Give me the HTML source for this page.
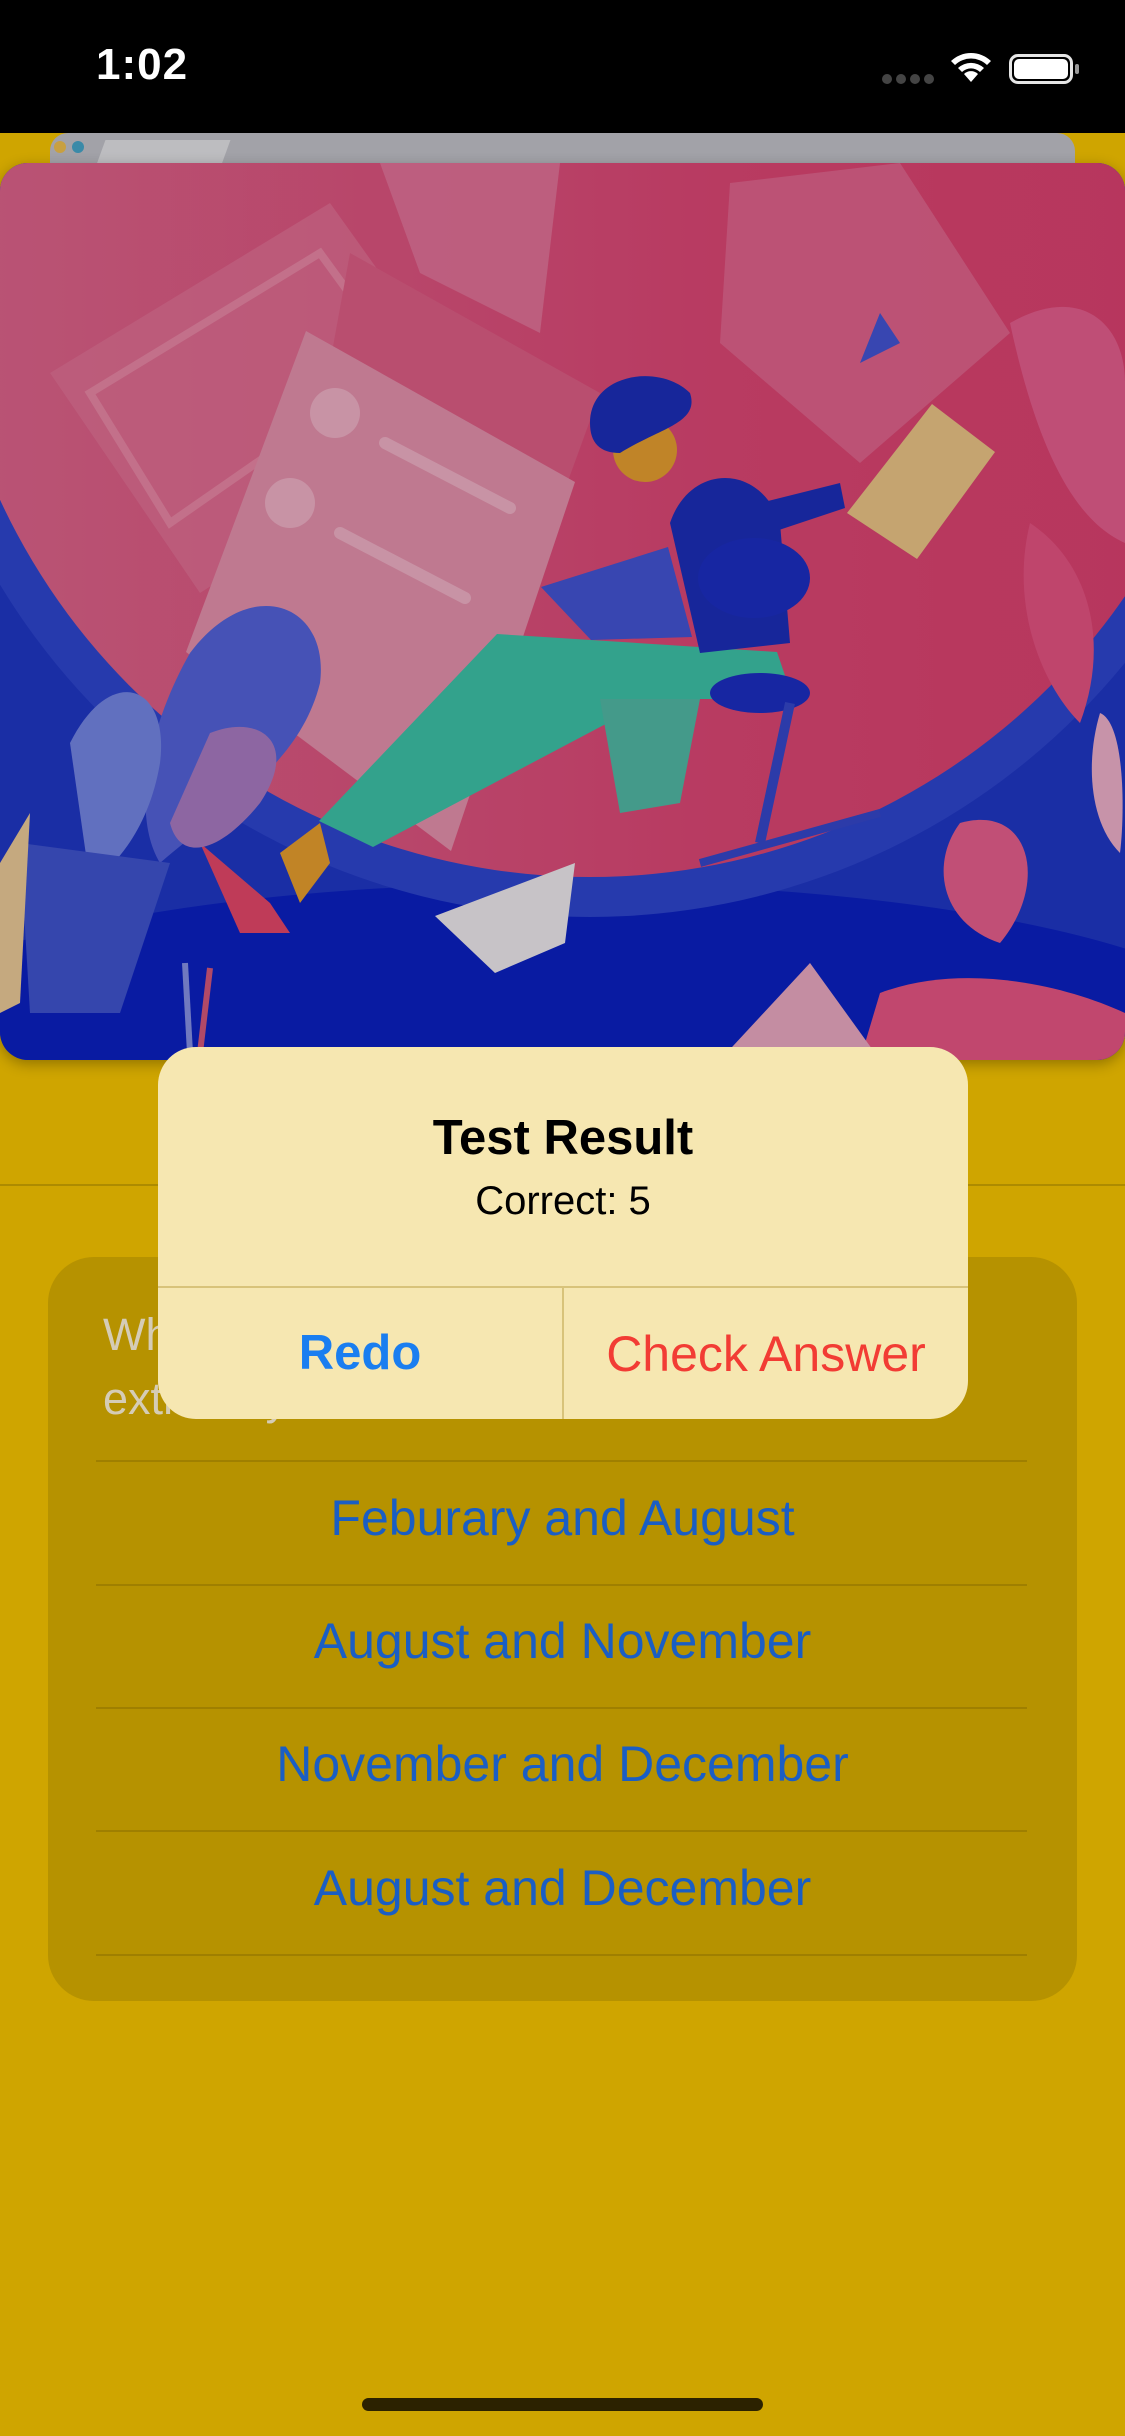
<!DOCTYPE html>
<html><head><meta charset="utf-8"><style>
*{margin:0;padding:0;box-sizing:border-box}
html,body{width:1125px;height:2436px;overflow:hidden;background:#cfa500;font-family:"Liberation Sans",sans-serif}
.abs{position:absolute}
</style></head><body>
<div class="abs" style="left:0;top:0;width:1125px;height:133px;background:#000"></div>
<div class="abs" style="left:96px;top:40px;color:#fff;font-size:44px;font-weight:bold;letter-spacing:1px">1:02</div>
<div class="abs" style="left:882px;top:74px;width:10px;height:10px;border-radius:5px;background:#444"></div>
<div class="abs" style="left:896px;top:74px;width:10px;height:10px;border-radius:5px;background:#444"></div>
<div class="abs" style="left:910px;top:74px;width:10px;height:10px;border-radius:5px;background:#444"></div>
<div class="abs" style="left:924px;top:74px;width:10px;height:10px;border-radius:5px;background:#444"></div>
<svg class="abs" style="left:948px;top:50px" width="46" height="34" viewBox="0 0 46 34">
<path d="M23 32 L16 24 A10 10 0 0 1 30 24 Z" fill="#fff"/>
<path d="M10 18 A19 19 0 0 1 36 18 L32 22 A13 13 0 0 0 14 22 Z" fill="#fff"/>
<path d="M3 11 A29 29 0 0 1 43 11 L39 15 A23 23 0 0 0 7 15 Z" fill="#fff"/>
</svg>
<div class="abs" style="left:1009px;top:54px;width:64px;height:30px;border:3px solid #fff;border-radius:9px;opacity:.9"></div>
<div class="abs" style="left:1014px;top:59px;width:54px;height:20px;background:#fff;border-radius:5px"></div>
<div class="abs" style="left:1075px;top:64px;width:4px;height:10px;background:#fff;border-radius:2px;opacity:.6"></div>

<div class="abs" style="left:50px;top:133px;width:1025px;height:50px;background:#a2a2a8;border-radius:18px 18px 0 0"></div>
<div class="abs" style="left:100px;top:140px;width:125px;height:30px;background:#bdbdc0;transform:skewX(-20deg)"></div>
<div class="abs" style="left:54px;top:141px;width:12px;height:12px;border-radius:6px;background:#c8a040"></div>
<div class="abs" style="left:72px;top:141px;width:12px;height:12px;border-radius:6px;background:#3a8aa8"></div>

<div class="abs" style="left:0;top:163px;width:1125px;height:897px;border-radius:28px;overflow:hidden;box-shadow:0 4px 14px rgba(0,0,0,.3)">
<svg width="1125" height="897" viewBox="0 0 1125 897">
<defs><linearGradient id="pk" x1="0" x2="1"><stop offset="0" stop-color="#c95d80"/><stop offset=".6" stop-color="#c8406a"/><stop offset="1" stop-color="#c73a64"/></linearGradient></defs>
<rect width="1125" height="897" fill="#1d32b4"/>
<ellipse cx="560" cy="880" rx="700" ry="160" fill="#0a1eb0"/>
<circle cx="590" cy="64" r="690" fill="#2a3fbc"/>
<circle cx="590" cy="64" r="650" fill="url(#pk)"/>
<polygon points="50,210 330,40 480,250 200,430" fill="#cf6a8a" opacity=".7"/>
<polygon points="90,230 320,90 400,200 170,360" fill="none" stroke="#d88aa2" stroke-width="8" opacity=".6"/>
<polygon points="380,0 560,0 540,170 420,110" fill="#d07494" opacity=".7"/>
<polygon points="350,90 600,230 560,340 330,200" fill="#c95579"/>
<polygon points="306,168 575,319 451,688 186,489" fill="#d0849d"/>
<circle cx="335" cy="250" r="25" fill="#d9a0b4"/><circle cx="290" cy="340" r="25" fill="#d9a0b4"/>
<line x1="385" y1="280" x2="510" y2="345" stroke="#d9a0b4" stroke-width="12" stroke-linecap="round"/>
<line x1="340" y1="370" x2="465" y2="435" stroke="#d9a0b4" stroke-width="12" stroke-linecap="round"/>
<polygon points="730,20 900,0 1010,170 860,300 720,180" fill="#cd6085" opacity=".8"/>
<polygon points="847,350 932,241 995,289 917,396" fill="#d6b27a"/>
<path d="M1010 160 C1080 120 1125 160 1125 220 L1125 380 C1080 360 1040 300 1010 160Z" fill="#d05580"/>
<path d="M1030 360 C1090 400 1110 480 1080 560 C1040 520 1010 440 1030 360Z" fill="#d04b76"/>
<path d="M1100 550 C1125 560 1125 650 1120 690 C1090 660 1085 600 1100 550Z" fill="#d8a0b8"/>
<path d="M960 660 C1030 640 1050 720 1000 780 C940 760 930 700 960 660Z" fill="#d25680"/>
<path d="M880 830 C960 800 1060 820 1125 850 L1125 897 L860 897Z" fill="#d24e78"/>
<polygon points="720,897 810,800 880,897" fill="#d59ab0"/>
<polygon points="319,658 497,471 777,489 793,536 653,536 373,684" fill="#38b098"/>
<polygon points="600,536 700,536 680,640 620,650" fill="#4aa896"/>
<path d="M200 680 L270 740 L290 770 L240 770Z" fill="#d04060"/>
<polygon points="280,690 320,660 330,700 300,740" fill="#d2902a"/>
<polygon points="541,424 668,384 692,474 591,477" fill="#3d4cc0"/>
<path d="M670 360 C690 300 760 300 780 360 L790 480 L700 490Z" fill="#1a2aa8"/>
<polygon points="760,340 840,320 845,345 770,370" fill="#1a2aa8"/>
<circle cx="645" cy="287" r="32" fill="#d1902c"/>
<path d="M590 260 C590 210 660 200 690 230 C700 260 660 265 620 290 C600 290 590 280 590 260Z" fill="#1a2aa8"/>
<ellipse cx="754" cy="415" rx="56" ry="40" fill="#1a2ab0"/>
<ellipse cx="760" cy="530" rx="50" ry="20" fill="#1a2ab0"/>
<line x1="790" y1="540" x2="760" y2="680" stroke="#3040b8" stroke-width="10"/>
<line x1="700" y1="700" x2="880" y2="650" stroke="#3040b8" stroke-width="8"/>
<path d="M860 200 L880 150 L900 180Z" fill="#3d4cc0"/>
<path d="M190 490 C250 410 330 440 320 520 C300 600 230 640 160 700 C130 650 150 560 190 490Z" fill="#4c5ac6"/>
<path d="M70 580 C110 500 170 520 160 600 C150 660 120 700 90 720Z" fill="#6a7ad0"/>
<path d="M210 570 C260 550 300 580 260 640 C220 690 180 700 170 660Z" fill="#9a6fb0"/>
<polygon points="20,680 170,700 120,850 30,850" fill="#3a4cbc"/>
<polygon points="0,700 30,650 20,840 0,850" fill="#d6b88a"/>
<polygon points="435,753 575,700 565,780 495,810" fill="#d8d4d8"/>
<line x1="185" y1="800" x2="190" y2="890" stroke="#7a84d0" stroke-width="6"/>
<line x1="210" y1="805" x2="200" y2="890" stroke="#c05070" stroke-width="6"/>
</svg>
<div class="abs" style="left:0;top:0;width:1125px;height:897px;background:rgba(0,0,0,.08)"></div>
</div>

<div class="abs" style="left:0;top:1184px;width:1125px;height:2px;background:#ad8b00"></div>

<div class="abs" style="left:48px;top:1257px;width:1029px;height:744px;background:#b69200;border-radius:46px"></div>
<div class="abs" style="left:103px;top:1303px;width:930px;color:#d5ccb6;font-size:45px;line-height:64px">Which two months have an<br>extra day</div>
<div class="abs" style="left:96px;top:1460px;width:931px;height:2px;background:#9f7f00"></div>
<div class="abs" style="left:96px;top:1584px;width:931px;height:2px;background:#9f7f00"></div>
<div class="abs" style="left:96px;top:1707px;width:931px;height:2px;background:#9f7f00"></div>
<div class="abs" style="left:96px;top:1830px;width:931px;height:2px;background:#9f7f00"></div>
<div class="abs" style="left:96px;top:1954px;width:931px;height:2px;background:#9f7f00"></div>
<div class="abs" style="left:48px;top:1490px;width:1029px;text-align:center;color:#1a5ec4;font-size:50px;line-height:56px">Feburary and August</div>
<div class="abs" style="left:48px;top:1613px;width:1029px;text-align:center;color:#1a5ec4;font-size:50px;line-height:56px">August and November</div>
<div class="abs" style="left:48px;top:1736px;width:1029px;text-align:center;color:#1a5ec4;font-size:50px;line-height:56px">November and December</div>
<div class="abs" style="left:48px;top:1860px;width:1029px;text-align:center;color:#1a5ec4;font-size:50px;line-height:56px">August and December</div>

<div class="abs" style="left:158px;top:1047px;width:810px;height:372px;background:#f6e7b1;border-radius:38px;overflow:hidden">
<div class="abs" style="left:0;top:63px;width:810px;text-align:center;font-size:49px;font-weight:bold;color:#000">Test Result</div>
<div class="abs" style="left:0;top:132px;width:810px;text-align:center;font-size:40px;color:#000">Correct: 5</div>
<div class="abs" style="left:0;top:239px;width:810px;height:2px;background:#d8c37a"></div>
<div class="abs" style="left:404px;top:240px;width:2px;height:132px;background:#d8c37a"></div>
<div class="abs" style="left:0;top:278px;width:404px;text-align:center;font-size:49px;font-weight:bold;color:#1a7ef0">Redo</div>
<div class="abs" style="left:406px;top:278px;width:404px;text-align:center;font-size:50px;color:#f23c34">Check Answer</div>
</div>

<div class="abs" style="left:362px;top:2398px;width:401px;height:13px;border-radius:7px;background:#2c2200"></div>
</body></html>
